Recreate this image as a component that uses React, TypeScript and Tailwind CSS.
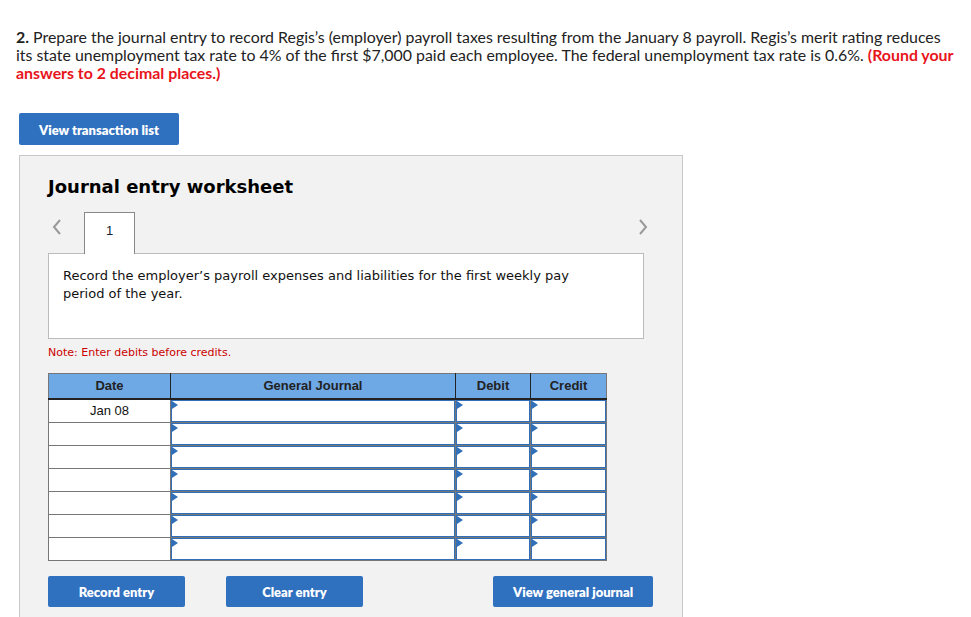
import React from "react";

const rows = ["Jan 08", "", "", "", "", "", ""];

function EntryCell() {
  return (
    <td className="p-0 border border-[#777]">
      <div className="relative h-[22px] border border-[#3170b8] bg-white">
        <span className="absolute left-0 top-0 w-0 h-0 border-l-[6px] border-l-[#3170b8] border-y-[4px] border-y-transparent" />
      </div>
    </td>
  );
}

function BlueButton({ label, w }: { label: string; w: string }) {
  return (
    <button
      className={`${w} h-[31px] pt-[3px] rounded-[2px] bg-[#2f70bf] text-white text-[13px] font-extrabold`}
      style={{ fontFamily: "Lato, 'Liberation Sans', sans-serif" }}
    >
      {label}
    </button>
  );
}

export default function App() {
  return (
    <div className="w-[971px] h-[617px] overflow-hidden bg-white relative">
      <p
        className="pt-[28px] pl-[16px] text-[15.9px] leading-[18px] text-[#222] whitespace-nowrap"
        style={{ fontFamily: "Lato, 'Liberation Sans', sans-serif" }}
      >
        <b>2.</b> Prepare the journal entry to record Regis’s (employer) payroll taxes resulting from the January 8 payroll. Regis’s merit rating reduces
        <br />
        its state unemployment tax rate to 4% of the first $7,000 paid each employee. The federal unemployment tax rate is 0.6%.{" "}
        <b className="text-[#e8141b]">(Round your</b>
        <br />
        <b className="text-[#e8141b]">answers to 2 decimal places.)</b>
      </p>

      <div className="pl-[19px] mt-[31px]">
        <BlueButton label="View transaction list" w="w-[160px] h-[32px]" />
      </div>

      <div className="ml-[19px] mt-[10px] w-[664px] h-[480px] bg-[#f2f2f2] border border-[#c8c8c8] pl-[28px] pt-[19px]">
        <h2
          className="text-[18px] leading-[24px] font-bold text-black"
          style={{ fontFamily: "'DejaVu Sans', Verdana, sans-serif" }}
        >
          Journal entry worksheet
        </h2>

        <div className="mt-[13px] w-[610px] flex items-start">
          <div className="w-[36px] pt-[7px] pl-[3px]">
            <svg width="12" height="16" viewBox="0 0 12 16">
              <path d="M9 1 L3 8 L9 15" fill="none" stroke="#999" strokeWidth="2" />
            </svg>
          </div>
          <div
            className="w-[51px] h-[42px] bg-white border border-b-0 border-[#888] flex justify-center pt-[8px] text-[13px] text-[#123] relative z-10"
            style={{ fontFamily: "'Liberation Sans', Arial, sans-serif" }}
          >
            1
          </div>
          <div className="flex-1" />
          <div className="pt-[7px] pr-[9px]">
            <svg width="12" height="16" viewBox="0 0 12 16">
              <path d="M3 1 L9 8 L3 15" fill="none" stroke="#999" strokeWidth="2" />
            </svg>
          </div>
        </div>

        <div
          className="-mt-[1px] w-[596px] h-[86px] bg-white border border-[#bbb] pl-[14px] pt-[13px] text-[13px] leading-[18px] text-[#111]"
          style={{ fontFamily: "'DejaVu Sans', Verdana, sans-serif" }}
        >
          Record the employer’s payroll expenses and liabilities for the first weekly pay
          <br />
          period of the year.
        </div>

        <p
          className="mt-[7px] text-[11px] leading-[14px] text-[#cc0000]"
          style={{ fontFamily: "'DejaVu Sans', Verdana, sans-serif" }}
        >
          Note: Enter debits before credits.
        </p>

        <table
          className="mt-[13px] border-collapse table-fixed w-[558px]"
          style={{ fontFamily: "'Liberation Sans', Arial, sans-serif" }}
        >
          <colgroup>
            <col className="w-[122px]" />
            <col className="w-[285px]" />
            <col className="w-[75px]" />
            <col className="w-[76px]" />
          </colgroup>
          <thead>
            <tr className="h-[25px] bg-[#6ea8e5] text-[13px] font-bold text-[#222]">
              <th className="border border-[#777] border-r-[#222] border-b-[#222] border-b-2">Date</th>
              <th className="border border-[#777] border-r-[#222] border-b-[#222] border-b-2">General Journal</th>
              <th className="border border-[#777] border-r-[#222] border-b-[#222] border-b-2">Debit</th>
              <th className="border border-[#777] border-b-[#222] border-b-2">Credit</th>
            </tr>
          </thead>
          <tbody>
            {rows.map((d, i) => (
              <tr key={i} className="h-[23px]">
                <td className="p-0 border border-[#777] bg-white text-center text-[13px] text-[#111] align-middle">
                  {d}
                </td>
                <EntryCell />
                <EntryCell />
                <EntryCell />
              </tr>
            ))}
          </tbody>
        </table>

        <div className="mt-[15px] flex">
          <BlueButton label="Record entry" w="w-[137px]" />
          <div className="w-[41px]" />
          <BlueButton label="Clear entry" w="w-[137px]" />
          <div className="w-[130px]" />
          <BlueButton label="View general journal" w="w-[160px]" />
        </div>
      </div>
    </div>
  );
}
